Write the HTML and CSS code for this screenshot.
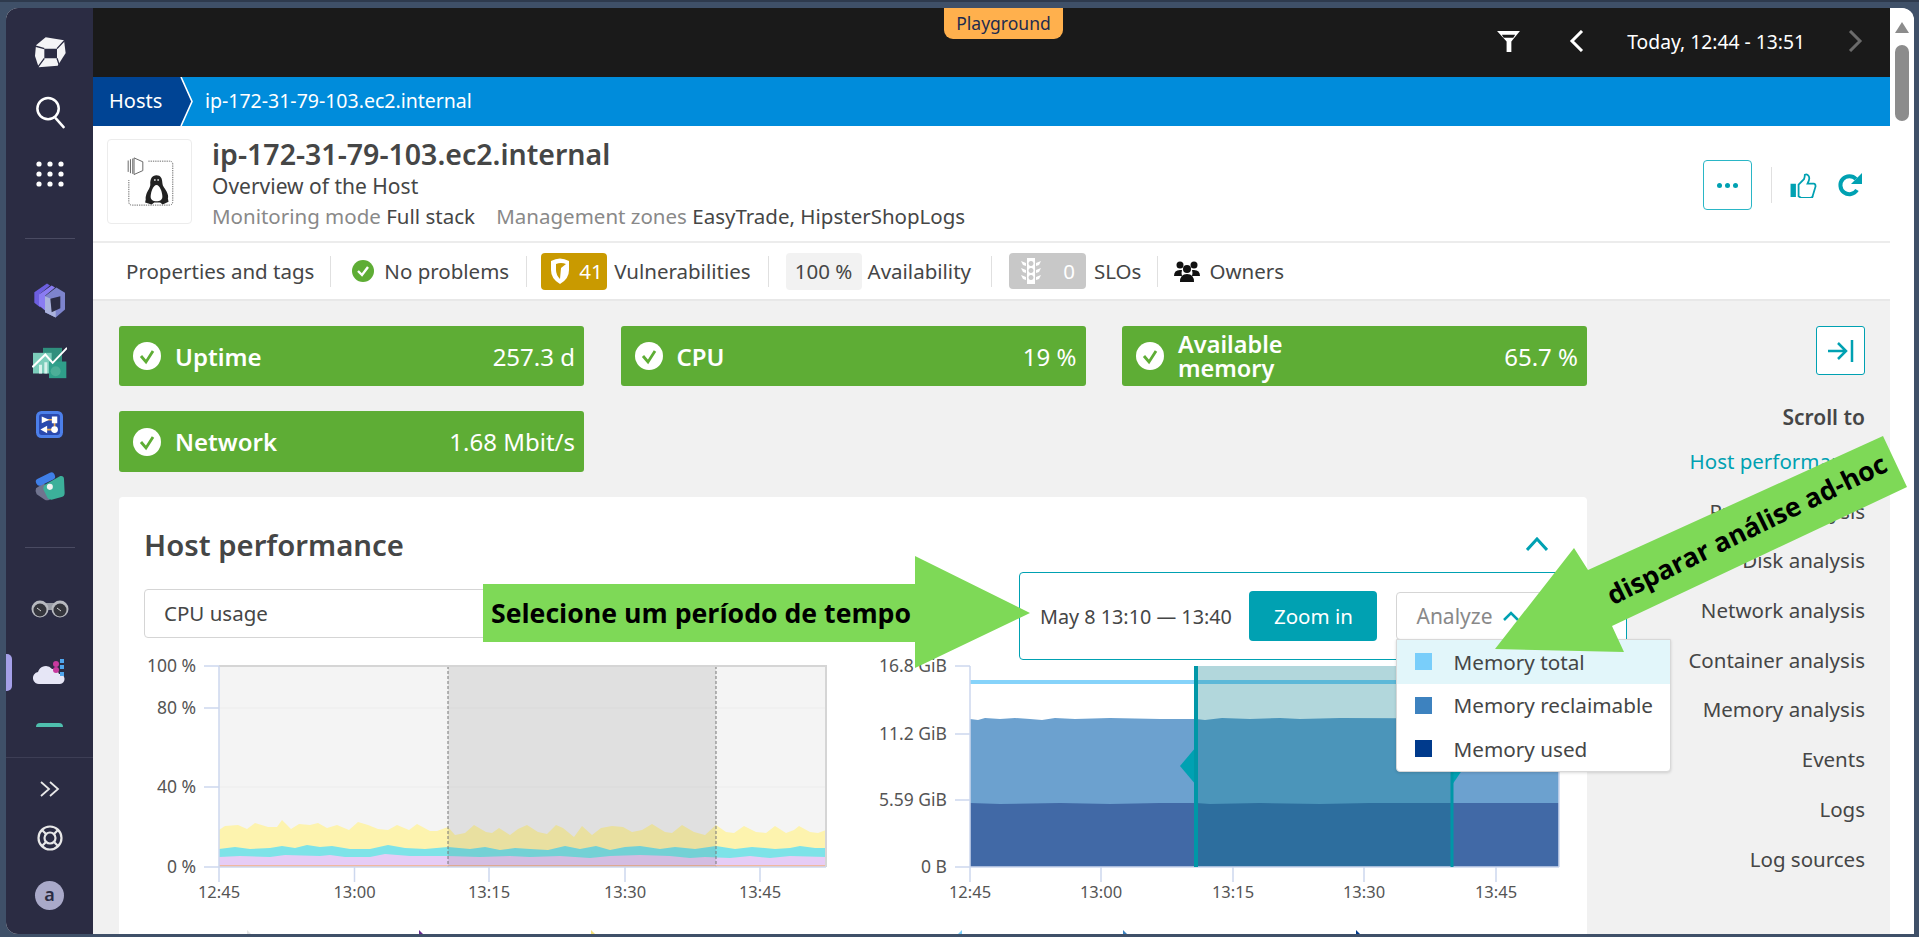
FILE: index.html
```html
<!DOCTYPE html>
<html lang="en">
<head>
    <meta charset="UTF-8">
    <meta name="viewport" content="width=device-width, initial-scale=1.0">
    <title>ip-172-31-79-103.ec2.internal</title>
    <link rel="stylesheet" href="styles.css">
</head>
<body>
    <div class="window">
        <nav class="sidebar">
            <svg class="side-icon logo" viewBox="0 0 150 150">
                <path fill="#f4f4f6" d="M33 52 62 28l55 9 5 38-24 38-57 5-11-34z"/>
                <path fill="#2b2c43" d="M58 62h38v29H58z"/>
                <path fill="none" stroke="#2b2c43" stroke-width="4" d="M30 54l28 8M96 62l24-26M96 91l8 24M58 91 38 118"/>
            </svg>
            <svg class="side-icon search" viewBox="0 0 30 34" fill="none" stroke="#fff" stroke-width="2.6" stroke-linecap="round">
                <circle cx="13" cy="13" r="11"/>
                <path d="M21 23l8 9"/>
            </svg>
            <svg class="side-icon apps" viewBox="0 0 28 26" fill="#fff">
                <circle cx="3" cy="3" r="2.6"/><circle cx="14" cy="3" r="2.6"/><circle cx="25" cy="3" r="2.6"/>
                <circle cx="3" cy="13" r="2.6"/><circle cx="14" cy="13" r="2.6"/><circle cx="25" cy="13" r="2.6"/>
                <circle cx="3" cy="23" r="2.6"/><circle cx="14" cy="23" r="2.6"/><circle cx="25" cy="23" r="2.6"/>
            </svg>
            <div class="side-divider first"></div>
            <svg class="side-icon cubes" viewBox="25 10 105 110">
                <path fill="#6d5fe0" d="M32 40 70 14l9 6-29 24v42L32 72z"/>
                <path fill="#8a7cf2" d="M46 47 84 20l10 6-29 24v46L46 80z"/>
                <path fill="#7d84cc" d="M64 52l34-26 26 16v50l-28 24-32-16z"/>
                <path fill="#aab2dc" d="M64 52l32 14v50l-32-16z"/>
                <path fill="#2b2c43" d="M80 60l30-8v36l-26 12z"/>
            </svg>
            <svg class="side-icon chart-app" viewBox="25 200 105 98">
                <path fill="#2f8f7d" d="M58 205h57v45H58z"/>
                <path fill="#7ccdbb" d="M28 220h56v62H28z"/>
                <path fill="#2f9f8a" d="M76 246h52v50H76z"/>
                <path fill="#d8f2ec" d="M46 282v-26h9v26zM62 282v-34h9v34z"/>
                <path fill="none" stroke="#fff" stroke-width="6" d="M26 263l39-38 22 25 43-45"/>
                <circle cx="96" cy="275" r="15" fill="#4cae98"/>
            </svg>
            <svg class="side-icon flow-app" viewBox="37 30 80 80">
                <rect x="37" y="30" width="80" height="80" rx="16" fill="#4c7fea"/>
                <rect x="46" y="39" width="62" height="62" rx="8" fill="#2a49ae"/>
                <path fill="none" stroke="#e6a650" stroke-width="5" d="M60 56h32v29H60"/>
                <path fill="#fff" d="M54 46l22 10-22 10zM84 46h16v20H84z"/>
                <path fill="#fff" d="M50 85l20-11v22z"/>
                <circle cx="92" cy="85" r="10" fill="#fff"/>
            </svg>
            <svg class="side-icon shapes-app" viewBox="28 205 92 95">
                <path fill="#70748f" d="M34 262l22-14 30 24-12 24q-8 4-14 0l-24-16q-6-8-2-18z"/>
                <path fill="#3cb09a" d="M60 252l46-26q10-2 11 8l2 42q0 10-9 12l-30 8q-8 0-12-6l-12-24q-2-8 4-14z"/>
                <rect x="32" y="224" width="60" height="22" rx="10" transform="rotate(-26 62 235)" fill="#3f7fe8"/>
                <circle cx="75" cy="258" r="9" fill="#f2f2f2"/>
            </svg>
            <div class="side-divider second"></div>
            <svg class="side-icon binoculars" viewBox="0 0 38 18">
                <path fill="#9a9da6" d="M12 3h14v7H12z"/>
                <circle cx="9" cy="9" r="8.5" fill="#b8bac0"/>
                <circle cx="29" cy="9" r="8.5" fill="#b8bac0"/>
                <circle cx="9" cy="10" r="6.5" fill="#34353c"/>
                <circle cx="29" cy="10" r="6.5" fill="#34353c"/>
                <path stroke="#d0d0d0" d="M6 8l4 3M26 8l4 3"/>
            </svg>
            <div class="active-app">
                <svg class="side-icon cloud" viewBox="0 0 33 26">
                    <path fill="#e6e6f6" d="M7 25a6 6 0 0 1-2-12 8 8 0 0 1 14-3 7 7 0 0 1 7 5 5 5 0 0 1 1 10z"/>
                    <circle cx="23" cy="5" r="3" fill="#c73a9e"/>
                    <circle cx="23" cy="11" r="3" fill="#c73a9e"/>
                    <path fill="#4fa6ee" d="M27 0h4v4h-4zM27 6h4v4h-4zM27 13h4v4h-4z"/>
                </svg>
            </div>
            <div class="cut-app"></div>
            <div class="side-bottom">
                <svg class="side-icon expand" viewBox="0 0 20 16" fill="none" stroke="#e8e8e8" stroke-width="1.8">
                    <path d="M1 1l8 7-8 7M10 1l8 7-8 7"/>
                </svg>
                <svg class="side-icon help" viewBox="0 0 26 26" fill="none" stroke="#e8e8e8" stroke-width="2.2">
                    <circle cx="13" cy="13" r="11.5"/>
                    <circle cx="13" cy="13" r="5.5"/>
                    <path d="M5 5l4 4M21 5l-4 4M5 21l4-4M21 21l-4-4"/>
                </svg>
                <div class="avatar">a</div>
            </div>
        </nav>

        <main class="main">
            <div class="topbar">
                <div class="playground">Playground</div>
                <svg class="filter-icon" viewBox="0 0 24 22">
                    <path fill="#fff" d="M0 0h24l-9 11v11h-5V11zM5 4l2 3h10l2-3z" fill-rule="evenodd"/>
                </svg>
                <svg class="chev left" viewBox="0 0 15 22" fill="none" stroke="#fff" stroke-width="3"><path d="M13 1 3 11l10 10"/></svg>
                <span class="timeframe">Today, 12:44 - 13:51</span>
                <svg class="chev right" viewBox="0 0 15 22" fill="none" stroke="#6b6b6b" stroke-width="3"><path d="M2 1l10 10L2 21"/></svg>
            </div>

            <div class="breadcrumbs">
                <a class="crumb-root">Hosts</a>
                <svg class="crumb-arrow" viewBox="0 0 14 49"><path fill="#004494" d="M0 0h1l11 24.500L1 49H0z"/><path fill="none" stroke="#fff" stroke-width="1.6" d="M1 0l11 24.500L1 49"/></svg>
                <a class="crumb-current">ip-172-31-79-103.ec2.internal</a>
            </div>

            <header class="host-header">
                <div class="host-icon">
                    <svg viewBox="6 12 255 255" width="83" height="83">
                        <path fill="none" stroke="#666" stroke-width="3" stroke-dasharray="4 3" d="M130 77h65q10 0 10 10v113q0 12-10 12H80q-10 0-10-10v-67"/>
                        <path fill="#fff" stroke="#666" stroke-width="3" d="M86 67l27 12v27l-27 12z"/>
                        <path stroke="#666" stroke-width="3" d="M68 75v35M75 71v43M82 69v47"/>
                        <path fill="#222" d="M155 120c-14 0-20 12-19 28 0 12-8 18-12 30-2 8-3 12-2 16l-2 10 20 6 8-6h18l8 6 18-8-2-10c2-6 0-14-4-22-5-10-13-16-13-26 0-14-5-24-18-24z"/>
                        <path fill="#fff" d="M155 150c-10 0-18 22-18 36 0 10 8 14 18 14s18-4 18-14c0-14-8-36-18-36z"/>
                        <path fill="#ddd" d="M148 132h4v6h-4zM158 132h4v6h-4z"/>
                    </svg>
                </div>
                <div class="host-info">
                    <h1 class="host-name">ip-172-31-79-103.ec2.internal</h1>
                    <div class="host-sub">Overview of the Host</div>
                    <div class="host-meta">
                        <span class="meta-label">Monitoring mode</span> Full stack
                        <span class="meta-label second-label">Management zones</span> EasyTrade, HipsterShopLogs
                    </div>
                </div>
                <div class="host-actions">
                    <button class="more-btn"><span></span><span></span><span></span></button>
                    <div class="action-sep"></div>
                    <svg class="thumb" viewBox="0 0 29 28">
                        <path fill="#00a1b2" d="M0 12h6v15H0z"/>
                        <path fill="none" stroke="#00a1b2" stroke-width="2" d="M9 13 15 7c1-2 1-4 1-5 2-1 5 0 5 4 0 2-1 4-2 6h7c2 0 2 2 2 3l-3 10c0 2-1 3-3 3H12l-3-2z"/>
                    </svg>
                    <svg class="refresh" viewBox="0 0 24 24">
                        <path fill="none" stroke="#00a1b2" stroke-width="4" d="M19 17a9 9 0 1 1-1-11"/>
                        <path fill="#00a1b2" d="M24 0v11H13z"/>
                    </svg>
                </div>
            </header>

            <div class="tabs">
                <span class="tab">Properties and tags</span>
                <i class="tab-sep sep-props"></i>
                <svg class="ok-icon" viewBox="0 0 22 22"><circle cx="11" cy="11" r="11" fill="#5ead35"/><path fill="none" stroke="#fff" stroke-width="2.400" d="M6 11l4 4 6-8"/></svg>
                <span class="tab no-problems">No problems</span>
                <i class="tab-sep sep-problems"></i>
                <span class="vuln-badge">
                    <svg viewBox="0 0 20 26" width="20" height="26"><path fill="#fff" d="M1 3q9-5 18 0v9q0 9-9 14Q1 21 1 12z"/><path fill="#c99a00" d="M6 6q5-2 10 0l-5 4-1 11q-4-4-4-9z"/></svg>
                    41
                </span>
                <span class="tab vuln-label">Vulnerabilities</span>
                <i class="tab-sep"></i>
                <span class="avail-box">100 %</span>
                <span class="tab avail-label">Availability</span>
                <i class="tab-sep sep-avail"></i>
                <span class="slo-badge">
                    <svg viewBox="0 0 22 26" width="22" height="26" fill="#fff"><path fill-rule="evenodd" d="M7 0h8v26H7zM11 3a2.500 2.500 0 1 0 .01 0zM11 10a2.500 2.500 0 1 0 .01 0zM11 17a2.500 2.500 0 1 0 .01 0z"/><path d="M1 3l5 2v3L3 7zM21 3l-5 2v3l3-1zM1 10l5 2v3l-3-1zM21 10l-5 2v3l3-1zM1 17l5 2v3l-3-1zM21 17l-5 2v3l3-1z"/></svg>
                    <b>0</b>
                </span>
                <span class="tab slo-label">SLOs</span>
                <i class="tab-sep sep-slo"></i>
                <svg class="owners-icon" viewBox="0 0 26 22" fill="#111"><circle cx="6" cy="5" r="3.500"/><circle cx="20" cy="5" r="3.500"/><circle cx="13" cy="9" r="4"/><path d="M0 16q0-6 6-6h2q-1 3 0 6zM26 16q0-6-6-6h-2q1 3 0 6zM6 22q0-8 7-8t7 8z"/></svg>
                <span class="tab">Owners</span>
            </div>

            <div class="content">
                <div class="col-main">
                    <div class="tiles">
                        <div class="tile">
                            <svg class="tile-check" viewBox="0 0 28 28"><circle cx="14" cy="14" r="14" fill="#fff"/><path fill="none" stroke="#5ead35" stroke-width="2.800" d="M8 14l5 6 7-11"/></svg>
                            <span class="tile-name">Uptime</span><span class="tile-value">257.3 d</span>
                        </div>
                        <div class="tile">
                            <svg class="tile-check" viewBox="0 0 28 28"><circle cx="14" cy="14" r="14" fill="#fff"/><path fill="none" stroke="#5ead35" stroke-width="2.800" d="M8 14l5 6 7-11"/></svg>
                            <span class="tile-name">CPU</span><span class="tile-value">19 %</span>
                        </div>
                        <div class="tile">
                            <svg class="tile-check" viewBox="0 0 28 28"><circle cx="14" cy="14" r="14" fill="#fff"/><path fill="none" stroke="#5ead35" stroke-width="2.800" d="M8 14l5 6 7-11"/></svg>
                            <span class="tile-name two-line">Available memory</span><span class="tile-value">65.7 %</span>
                        </div>
                        <div class="tile">
                            <svg class="tile-check" viewBox="0 0 28 28"><circle cx="14" cy="14" r="14" fill="#fff"/><path fill="none" stroke="#5ead35" stroke-width="2.800" d="M8 14l5 6 7-11"/></svg>
                            <span class="tile-name">Network</span><span class="tile-value">1.68 Mbit/s</span>
                        </div>
                    </div>

                    <section class="card">
                        <div class="card-head">
                            <h2>Host performance</h2>
                            <svg class="collapse" viewBox="0 0 22 14" fill="none" stroke="#00a1b2" stroke-width="3"><path d="M1 13 11 2l10 11"/></svg>
                        </div>
                        <div class="metric-select">CPU usage</div>

                        <div class="selection-panel">
                            <span class="selection-range">May 8 13:10 — 13:40</span>
                            <button class="zoom-btn">Zoom in</button>
                            <div class="analyze">
                                <span>Analyze</span>
                                <svg viewBox="0 0 16 10" width="16" height="10" fill="none" stroke="#00a1b2" stroke-width="2.500"><path d="M1 9l7-7 7 7"/></svg>
                                <ul class="analyze-menu">
                                    <li class="hover"><i class="swatch total"></i>Memory total</li>
                                    <li><i class="swatch reclaim"></i>Memory reclaimable</li>
                                    <li><i class="swatch used"></i>Memory used</li>
                                </ul>
                            </div>
                        </div>

                        <div class="charts">
                            <svg class="chart cpu" viewBox="143 648 730 286" width="730" height="286">
                                <rect x="219" y="666" width="607" height="201" fill="#f4f4f4"/>
                                <path class="grid" d="M219 708H826M219 787H826"/>
                                <polygon fill="#fdf3ae" points="219,830 225,826 238,825 247,829 255,823 268,827 277,827 282,820 291,829 299,824 310,825 318,823 327,828 337,825 349,830 358,822 368,825 378,829 388,830 397,825 409,830 417,824 430,831 437,831 448,827 455,835 465,833 474,825 486,832 492,833 499,828 510,835 518,829 527,825 538,832 547,834 556,825 563,828 574,837 582,826 592,835 601,828 612,826 623,827 632,832 642,830 652,824 665,832 672,833 682,825 694,832 705,835 716,825 726,832 734,833 744,826 756,832 766,833 775,826 786,833 794,830 799,826 810,832 818,833 826,830 826,867 219,867"/>
                                <polygon fill="#7de3e8" points="219,849 235,847 250,849 270,848 282,846 295,848 307,845 320,847 332,846 350,849 370,849 388,845 405,848 425,849 448,847 470,849 485,847 500,850 515,848 530,849 548,850 565,846 580,849 596,846 610,850 625,847 640,846 660,849 675,847 695,849 716,846 735,849 752,847 775,849 790,848 800,846 815,848 826,848 826,867 219,867"/>
                                <polygon fill="#e6ccf5" points="219,857 240,856 270,857 285,855 320,856 330,855 345,857 370,857 385,854 410,856 448,856 480,857 510,856 530,857 560,856 590,858 610,856 640,855 670,856 690,858 705,857 730,858 750,856 770,858 790,856 826,857 826,867 219,867"/>
                                <rect x="219" y="865" width="607" height="2" fill="#f0b8a0"/>
                                <rect x="448" y="666" width="268" height="201" fill="#000" opacity=".08"/>
                                <path class="dash" d="M448 666V867M716 666V867"/>
                                <path class="plot-frame" d="M219 666H826V867"/>
                                <path class="axis" d="M204 666H219M204 708H219M204 787H219M204 867H826M219 666V882M354.500 867V882M489 867V882M625 867V882M760 867V882"/>
                                <text class="y-label" x="196" y="672">100 %</text>
                                <text class="y-label" x="196" y="714">80 %</text>
                                <text class="y-label" x="196" y="793">40 %</text>
                                <text class="y-label" x="196" y="873">0 %</text>
                                <text class="x-label" x="219" y="898">12:45</text>
                                <text class="x-label" x="354.500" y="898">13:00</text>
                                <text class="x-label" x="489" y="898">13:15</text>
                                <text class="x-label" x="625" y="898">13:30</text>
                                <text class="x-label" x="760" y="898">13:45</text>
                                <polygon fill="#e4e4e4" points="247,934 247,930 251,934"/>
                                <polygon fill="#6a2c91" points="419,934 419,930 423,934"/>
                                <polygon fill="#f5e27a" points="591,934 591,930 595,934"/>
                            </svg>

                            <svg class="chart mem" viewBox="873 648 714 286" width="714" height="286">
                                <polygon fill="#6ca1cf" points="970,719 978,720 985,718 1000,719 1015,718 1030,719 1042,720 1055,718 1075,719 1110,718 1160,719 1196,719 1205,720 1222,718 1250,719 1280,718 1300,719 1340,718 1559,719 1559,867 970,867"/>
                                <polygon fill="#4169a6" points="970,803 1000,804 1060,803 1110,804 1160,803 1196,803 1210,804 1260,803 1320,804 1370,803 1559,803 1559,867 970,867"/>
                                <rect x="970" y="680" width="589" height="4" fill="#79cefa" opacity=".9"/>
                                <rect x="1196" y="666" width="256" height="201" fill="#007a8a" opacity=".3"/>
                                <path class="axis" d="M955 666H970M955 734H970M955 800H970M955 867H1559M970 666V882M1101 867V882M1233 867V882M1364 867V882M1496 867V882M1559 719V867"/>
                                <polygon fill="#00a1b2" points="1196,747 1180,766 1196,785"/>
                                <polygon fill="#00a1b2" points="1452,747 1465,766 1452,785"/>
                                <rect x="1194" y="666" width="4" height="201" fill="#0097a7"/>
                                <rect x="1450.500" y="666" width="3" height="201" fill="#0097a7"/>
                                <text class="y-label" x="947" y="672">16.8 GiB</text>
                                <text class="y-label" x="947" y="740">11.2 GiB</text>
                                <text class="y-label" x="947" y="806">5.59 GiB</text>
                                <text class="y-label" x="947" y="873">0 B</text>
                                <text class="x-label" x="970" y="898">12:45</text>
                                <text class="x-label" x="1101" y="898">13:00</text>
                                <text class="x-label" x="1233" y="898">13:15</text>
                                <text class="x-label" x="1364" y="898">13:30</text>
                                <text class="x-label" x="1496" y="898">13:45</text>
                                <polygon fill="#79cefa" points="958,934 962,930 962,934"/>
                                <polygon fill="#3d82bf" points="1123,934 1123,930 1127,934"/>
                                <polygon fill="#003a8c" points="1356,934 1356,930 1360,934"/>
                            </svg>
                        </div>
                    </section>
                </div>

                <aside class="col-side">
                    <button class="side-toggle">
                        <svg viewBox="0 0 26 24" width="26" height="24" fill="none" stroke="#00a1b2" stroke-width="2.500"><path d="M0 12h17M10 4l8 8-8 8M24 1v22"/></svg>
                    </button>
                    <div class="scroll-title">Scroll to</div>
                    <a class="scroll-link active">Host performance</a>
                    <a class="scroll-link">Process analysis</a>
                    <a class="scroll-link">Disk analysis</a>
                    <a class="scroll-link">Network analysis</a>
                    <a class="scroll-link">Container analysis</a>
                    <a class="scroll-link">Memory analysis</a>
                    <a class="scroll-link">Events</a>
                    <a class="scroll-link">Logs</a>
                    <a class="scroll-link">Log sources</a>
                </aside>
            </div>
        </main>

        <div class="scrollbar">
            <div class="scroll-up"></div>
            <div class="scroll-thumb"></div>
        </div>
    </div>

    <!-- green annotations drawn on top of the screenshot -->
    <svg class="annotations" viewBox="0 0 1919 937" width="1919" height="937">
        <polygon fill="#7ed957" points="483,584 915,584 915,556 1030,613 915,668 915,642 483,642"/>
        <text class="note first-note" x="491" y="623">Selecione um período de tempo</text>
        <polygon fill="#7ed957" points="1883,436 1907,487 1612,626 1624,652 1495,649 1574,548 1588,570"/>
        <text class="note tilted" x="1751" y="538" transform="rotate(-26 1751 538)">disparar análise ad-hoc</text>
    </svg>
</body>
</html>
```

FILE: styles.css
```css
* {
    box-sizing: border-box;
}
html, body {
    margin: 0;
    height: 937px;
    overflow: hidden;
}
body {
    position: relative;
    font-family: "Noto Sans", Arial, sans-serif;
    font-size: 20.500px;
    color: #454646;
    background-color: #3f5068;
    border-top: 2px solid #2e3a4d;
}
.window {
    display: flex;
    width: 1908px;
    height: 926px;
    margin: 6px 0 0 6px;
    border-radius: 12px 12px 0 12px;
    overflow: hidden;
    background-color: #f1f1f1;
}

/* left app bar */
.sidebar {
    position: relative;
    display: flex;
    flex-direction: column;
    align-items: center;
    width: 87px;
    flex-shrink: 0;
    background-color: #2b2c43;
}
.side-icon {
    display: block;
}
.logo {
    width: 50px;
    height: 50px;
    margin-top: 20px;
}
.search {
    width: 30px;
    height: 33px;
    margin-top: 18px;
}
.apps {
    width: 28px;
    height: 26px;
    margin-top: 32px;
}
.side-divider {
    width: 50px;
    height: 1px;
    background-color: #4a4b62;
}
.side-divider.first {
    margin-top: 51px;
}
.cubes {
    width: 35px;
    height: 37px;
    margin-top: 43px;
}
.chart-app {
    width: 35px;
    height: 33px;
    margin-top: 27px;
}
.flow-app {
    width: 27px;
    height: 27px;
    margin-top: 32px;
}
.shapes-app {
    width: 31px;
    height: 32px;
    margin-top: 31px;
}
.side-divider.second {
    margin-top: 46px;
}
.binoculars {
    width: 38px;
    height: 18px;
    margin-top: 52px;
}
.active-app {
    position: relative;
    width: 100%;
    display: flex;
    justify-content: center;
    height: 37px;
    margin-top: 36px;
    padding-top: 6px;
}
.active-app::before {
    content: "";
    position: absolute;
    top: 0;
    left: 0;
    width: 6px;
    height: 37px;
    border-radius: 0 5px 5px 0;
    background-color: #a5a0e8;
}
.cloud {
    width: 33px;
    height: 28px;
    margin-top: -2px;
}
.cut-app {
    width: 27px;
    height: 4px;
    margin-top: 32px;
    border-radius: 8px 8px 0 0;
    background-color: #4fbfae;
}
.side-bottom {
    display: flex;
    flex-direction: column;
    align-items: center;
    width: 100%;
    margin-top: 30px;
    border-top: 1px solid #3d3e55;
}
.expand {
    width: 20px;
    height: 16px;
    margin-top: 23px;
}
.help {
    width: 26px;
    height: 26px;
    margin-top: 28px;
}
.avatar {
    width: 29px;
    height: 29px;
    margin-top: 30px;
    border-radius: 50%;
    background-color: #a9a9c9;
    color: #2b2c43;
    font-size: 18px;
    font-weight: 600;
    line-height: 27px;
    text-align: center;
}

/* main column */
.main {
    display: flex;
    flex-direction: column;
    width: 1797px;
    flex-shrink: 0;
}
.topbar {
    position: relative;
    display: flex;
    align-items: center;
    justify-content: flex-end;
    height: 69px;
    flex-shrink: 0;
    padding-right: 27px;
    padding-bottom: 3px;
    background-color: #1a1a1a;
}
.playground {
    position: absolute;
    top: 0;
    left: 851px;
    width: 119px;
    height: 31px;
    border-radius: 0 0 9px 9px;
    background-color: #ffb04d;
    color: #1d2b4f;
    font-size: 17.500px;
    line-height: 30px;
    text-align: center;
}
.filter-icon {
    width: 23px;
    height: 21px;
}
.chev {
    width: 15px;
    height: 22px;
}
.chev.left {
    margin-left: 49px;
}
.chev.right {
    margin-left: 43px;
}
.timeframe {
    margin-left: 43px;
    color: #fff;
    font-size: 19.300px;
    white-space: nowrap;
}
.breadcrumbs {
    display: flex;
    align-items: stretch;
    height: 49px;
    flex-shrink: 0;
    background-color: #008cdb;
    color: #fff;
    line-height: 48px;
}
.crumb-root {
    width: 87px;
    padding-left: 16px;
    background-color: #004494;
    font-size: 20px;
}
.crumb-arrow {
    width: 14px;
    height: 49px;
}
.crumb-current {
    margin-left: 11px;
    font-size: 19.500px;
}
.host-header {
    display: flex;
    align-items: flex-start;
    height: 117px;
    flex-shrink: 0;
    padding: 13px 0 0 14px;
    background-color: #fff;
    border-bottom: 2px solid #ececec;
}
.host-icon {
    display: flex;
    align-items: center;
    justify-content: center;
    width: 85px;
    height: 85px;
    border: 1px solid #ececec;
    border-radius: 4px;
}
.host-info {
    margin-left: 20px;
    margin-top: -2px;
}
.host-name {
    margin: 0;
    font-size: 28.500px;
    font-weight: 600;
    line-height: 34px;
    color: #454646;
}
.host-sub {
    font-size: 21px;
    line-height: 28px;
    margin-top: 1px;
}
.host-meta {
    line-height: 30px;
    margin-top: 1px;
    white-space: nowrap;
}
.meta-label {
    color: #898989;
}
.second-label {
    margin-left: 16px;
}
.host-actions {
    display: flex;
    align-items: center;
    margin-left: auto;
    margin-top: 21px;
    padding-right: 28px;
}
.more-btn {
    display: flex;
    align-items: center;
    justify-content: center;
    gap: 3px;
    width: 49px;
    height: 50px;
    padding: 0;
    border: 1px solid #2ab6c6;
    border-radius: 4px;
    background-color: #fff;
}
.more-btn span {
    width: 5px;
    height: 5px;
    border-radius: 50%;
    background-color: #00a1b2;
}
.action-sep {
    width: 1px;
    height: 36px;
    margin: 0 17px 0 19px;
    background-color: #e0e0e0;
}
.thumb {
    width: 29px;
    height: 25px;
}
.refresh {
    width: 24px;
    height: 24px;
    margin-left: 20px;
}
.tabs {
    display: flex;
    align-items: center;
    height: 58px;
    flex-shrink: 0;
    padding-left: 33px;
    background-color: #fff;
    border-bottom: 2px solid #e8e8e8;
    white-space: nowrap;
}
.tab-sep {
    width: 1px;
    height: 31px;
    margin: 0 17px;
    background-color: #e0e0e0;
}
.tab-sep.sep-props {
    margin-left: 16px;
}
.tab-sep.sep-problems {
    margin-right: 14px;
}
.tab-sep.sep-avail {
    margin-left: 20px;
}
.tab-sep.sep-slo {
    margin-left: 16px;
}
.ok-icon {
    width: 22px;
    height: 22px;
    margin-left: 4px;
}
.no-problems {
    margin-left: 10px;
}
.vuln-badge {
    display: flex;
    align-items: center;
    gap: 9px;
    width: 66px;
    height: 37px;
    padding-left: 9px;
    border-radius: 4px;
    background-color: #c99a00;
    color: #fff;
}
.vuln-label {
    margin-left: 7px;
}
.avail-box {
    width: 76px;
    height: 37px;
    border-radius: 4px;
    background-color: #f2f2f2;
    line-height: 36px;
    text-align: center;
}
.avail-label {
    margin-left: 6px;
}
.slo-badge {
    display: flex;
    align-items: center;
    justify-content: space-between;
    width: 77px;
    height: 36px;
    padding: 0 11px;
    border-radius: 4px;
    background-color: #c8c8c8;
    color: #fff;
}
.slo-badge b {
    font-weight: 400;
}
.slo-label {
    margin-left: 8px;
}
.owners-icon {
    width: 26px;
    height: 22px;
    margin: 0 9px 0 -1px;
}

/* page body */
.content {
    display: flex;
    flex: 1;
    min-height: 0;
    padding: 25px 25px 0 26px;
}
.col-main {
    width: 1468px;
    flex-shrink: 0;
}
.tiles {
    display: grid;
    grid-template-columns: repeat(3, 465px);
    grid-template-rows: 60px 61px;
    column-gap: 36.500px;
    row-gap: 25px;
}
.tile {
    display: flex;
    align-items: center;
    padding: 0 9px 0 14px;
    border-radius: 3px;
    background-color: #5ead35;
    color: #fff;
    font-size: 24px;
}
.tile-check {
    width: 28px;
    height: 28px;
    flex-shrink: 0;
}
.tile-name {
    margin-left: 14px;
    font-weight: 600;
}
.tile-name.two-line {
    width: 130px;
    font-size: 23.500px;
    line-height: 24px;
}
.tile-value {
    margin-left: auto;
}
.card {
    position: relative;
    height: 500px;
    margin-top: 25px;
    padding: 0 25px;
    border-radius: 4px;
    background-color: #fff;
}
.card-head {
    display: flex;
    align-items: center;
    justify-content: space-between;
    height: 92px;
    padding: 4px 14px 0 0;
}
.card-head h2 {
    margin: 0;
    font-size: 29.300px;
    font-weight: 600;
    color: #454646;
}
.collapse {
    width: 22px;
    height: 14px;
    margin-top: -2px;
}
.metric-select {
    width: 750px;
    height: 49px;
    padding-left: 19px;
    border: 1px solid #d5d5d5;
    border-radius: 4px;
    line-height: 47px;
}
.selection-panel {
    position: absolute;
    top: 75px;
    left: 900px;
    z-index: 2;
    display: flex;
    align-items: center;
    width: 608px;
    height: 88px;
    padding: 0 20px;
    border: 1px solid #00a1b2;
    border-radius: 4px;
    background-color: #fff;
    white-space: nowrap;
}
.selection-range {
    width: 210px;
    font-size: 19.800px;
}
.zoom-btn {
    width: 128px;
    height: 50px;
    padding: 0;
    flex-shrink: 0;
    border: none;
    border-radius: 4px;
    background-color: #00a1b2;
    color: #fff;
    font-family: inherit;
    font-size: 20.500px;
}
.analyze {
    position: relative;
    display: flex;
    align-items: center;
    gap: 10px;
    width: 210px;
    height: 48px;
    margin-left: 19px;
    padding-left: 19px;
    border: 1px solid #d5d5d5;
    border-radius: 4px;
    color: #898989;
    font-size: 21px;
}
.analyze-menu {
    position: absolute;
    top: 46px;
    left: -1px;
    width: 275px;
    margin: 0;
    padding: 0;
    list-style: none;
    border: 1px solid #d8d8d8;
    border-radius: 0 0 4px 4px;
    background-color: #fff;
    color: #454646;
    font-size: 20.700px;
    box-shadow: 0 1px 3px rgba(0, 0, 0, 0.15);
}
.analyze-menu li {
    display: flex;
    align-items: center;
    height: 43.500px;
    padding-left: 18px;
}
.analyze-menu li.hover {
    background-color: #e2f6fa;
}
.swatch {
    width: 17px;
    height: 17px;
    margin-right: 21px;
}
.swatch.total {
    background-color: #79cefa;
}
.swatch.reclaim {
    background-color: #3d82bf;
}
.swatch.used {
    background-color: #003a8c;
}
.charts {
    display: flex;
    margin: 10px 0 0 -1px;
}
.chart {
    display: block;
    flex-shrink: 0;
}
.chart .grid {
    stroke: #ececec;
    fill: none;
}
.chart .dash {
    stroke: #777;
    stroke-dasharray: 3 2;
    fill: none;
}
.chart .plot-frame {
    stroke: #d5d5d5;
    stroke-width: 2;
    fill: none;
}
.chart .axis {
    stroke: #cdd8ee;
    stroke-width: 1.500;
    fill: none;
}
.y-label,
.x-label {
    font-family: "Noto Sans", Arial, sans-serif;
    font-size: 16.500px;
    fill: #555;
}
.y-label {
    font-size: 17.500px;
    text-anchor: end;
}
.x-label {
    text-anchor: middle;
}

/* right side scroll-to column */
.col-side {
    display: flex;
    flex-direction: column;
    align-items: flex-end;
    flex: 1;
    min-width: 0;
    white-space: nowrap;
}
.side-toggle {
    display: flex;
    align-items: center;
    justify-content: center;
    width: 49px;
    height: 49px;
    padding: 0;
    flex-shrink: 0;
    border: 1px solid #00a1b2;
    border-radius: 3px;
    background-color: #fff;
}
.scroll-title {
    margin-top: 29px;
    font-size: 21px;
    font-weight: 600;
    line-height: 26px;
}
.scroll-link {
    margin-top: 23.700px;
    line-height: 26px;
}
.scroll-title + .scroll-link {
    margin-top: 18px;
}
.scroll-link.active {
    color: #00a1b2;
}
.scrollbar {
    position: relative;
    width: 24px;
    flex-shrink: 0;
    border-radius: 0 12px 0 0;
    background-color: #fff;
}
.scroll-up {
    position: absolute;
    top: 14px;
    left: 5px;
    width: 0;
    height: 0;
    border-left: 7px solid transparent;
    border-right: 7px solid transparent;
    border-bottom: 11px solid #8c8c8c;
}
.scroll-thumb {
    position: absolute;
    top: 37px;
    left: 5px;
    width: 14px;
    height: 76px;
    border-radius: 7px;
    background-color: #8c8c8c;
}

/* annotations */
.annotations {
    position: absolute;
    top: -2px;
    left: 0;
    z-index: 5;
    pointer-events: none;
}
.note {
    font-family: "Open Sans", "Noto Sans", sans-serif;
    font-size: 26.500px;
    font-weight: 700;
    fill: #000;
}
.note.first-note {
    font-size: 26.700px;
}
.note.tilted {
    text-anchor: middle;
}
```
